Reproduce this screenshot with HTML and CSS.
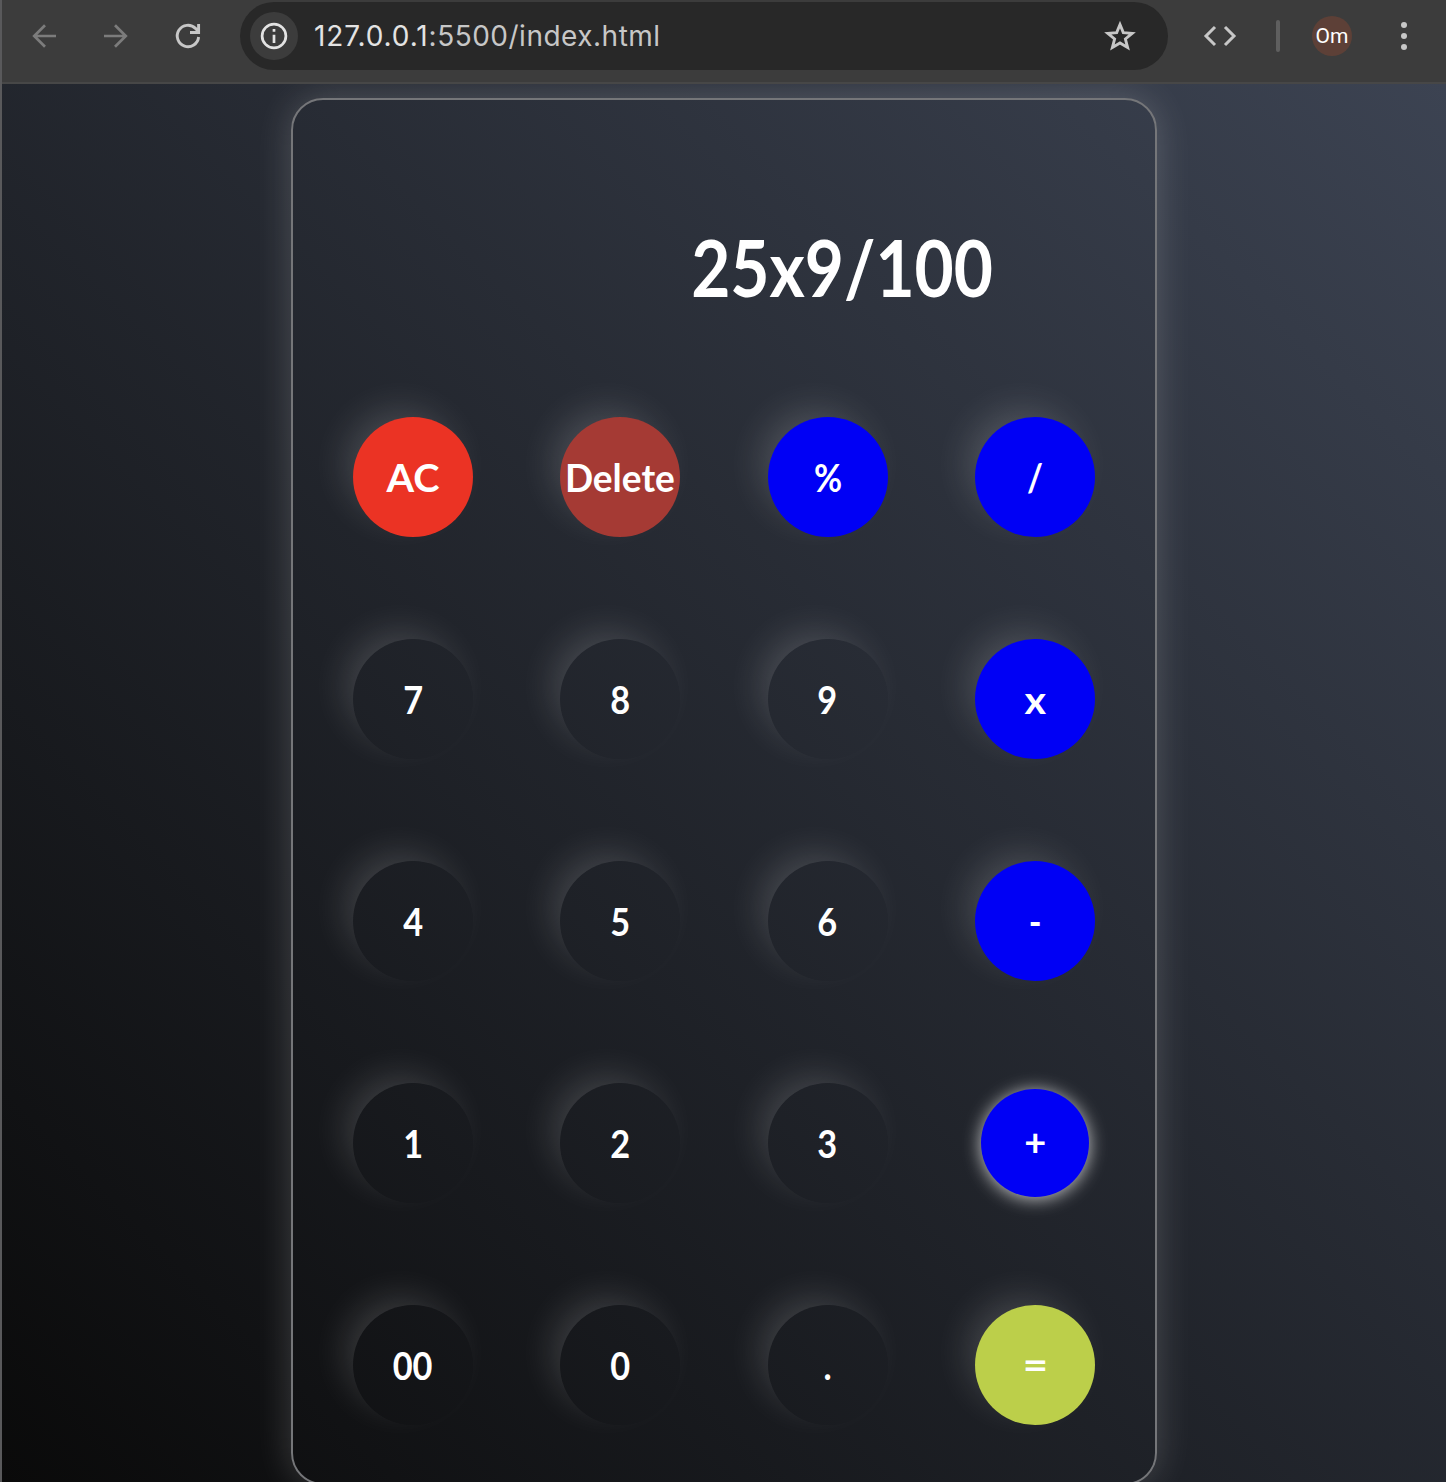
FILE: index.html
```html
<!DOCTYPE html>
<html lang="en">
<head>
<meta charset="utf-8">
<title>Calculator</title>
<link rel="stylesheet" href="styles.css">
</head>
<body>
<header class="toolbar">
  <svg class="icon nav-back dim" viewBox="0 0 40 40"><path d="M36 20H14M25 9.200L14.200 20L25 30.800"/></svg>
  <svg class="icon nav-forward dim" viewBox="0 0 40 40"><path d="M4 20H26M15 9.200L25.800 20L15 30.800"/></svg>
  <svg class="icon nav-reload" viewBox="0 0 40 40"><path d="M30.600 21A10.700 10.700 0 1 1 27.500 12.400L30 15M30.600 8V16.500H22"/></svg>
  <div class="omnibox">
    <span class="site-info"><svg viewBox="0 0 28 28"><circle cx="14" cy="14" r="11.900"/><path d="M14 12.700V21M14 7V9.800"/></svg></span>
    <span class="url"><b>127.0.0.1</b>:5500/index.html</span>
    <svg class="star" viewBox="0 0 32 32"><path d="M16 4.500L19.300 12.600L28.200 13.300L21.400 19L23.600 27.500L16 22.900L8.400 27.500L10.600 19L3.800 13.300L12.700 12.600Z"/></svg>
  </div>
  <svg class="code" viewBox="0 0 36 24"><path d="M13 3L4 12L13 21M23 3L32 12L23 21"/></svg>
  <span class="divider"></span>
  <span class="avatar">Om</span>
  <span class="menu"><i></i><i></i><i></i></span>
</header>
<main class="page">
  <section class="calculator">
    <div class="display"><span>25x9/100</span></div>
    <div class="keys">
      <button class="key clear"><span>AC</span></button>
      <button class="key delete"><span>Delete</span></button>
      <button class="key operator"><span>%</span></button>
      <button class="key operator"><span>/</span></button>
      <button class="key"><span>7</span></button>
      <button class="key"><span>8</span></button>
      <button class="key"><span>9</span></button>
      <button class="key operator times"><span>x</span></button>
      <button class="key"><span>4</span></button>
      <button class="key"><span>5</span></button>
      <button class="key"><span>6</span></button>
      <button class="key operator"><span>-</span></button>
      <button class="key"><span>1</span></button>
      <button class="key"><span>2</span></button>
      <button class="key"><span>3</span></button>
      <button class="key operator pressed"><span>+</span></button>
      <button class="key"><span>00</span></button>
      <button class="key"><span>0</span></button>
      <button class="key"><span>.</span></button>
      <button class="key equals"><span>=</span></button>
    </div>
  </section>
</main>
</body>
</html>
```
FILE: styles.css
```css
* { box-sizing: border-box; }
html, body { margin: 0; height: 1482px; overflow: hidden; }
body { display: flex; flex-direction: column; background: #0a0a0a; border-left: 2px solid #59595b; }

.toolbar {
  flex: none;
  display: flex;
  align-items: center;
  height: 84px;
  padding: 0 22px 10px;
  background: #3c3c3c;
  border-bottom: 2px solid #474747;
}
.toolbar svg { display: block; flex: none; fill: none; stroke: #c7c7c7; stroke-width: 2.9; }
.icon { width: 40px; height: 40px; }
.toolbar .dim { stroke: #7c7c7c; stroke-width: 2.7; }
.nav-back { margin-left: -4px; }
.nav-forward { margin-left: 40px; }
.nav-reload { margin-left: 28px; }
.omnibox {
  display: flex;
  align-items: center;
  width: 928px;
  height: 68px;
  margin-left: 32px;
  padding: 0 32px 0 10px;
  border-radius: 34px;
  background: #282828;
}
.site-info { display: flex; align-items: center; justify-content: center; width: 48px; height: 48px; border-radius: 50%; background: #3c3c3c; }
.toolbar .site-info svg { width: 28px; height: 28px; stroke: #e3e3e3; stroke-width: 2.7; }
.url { margin-left: 16px; color: #c7c7c7; font: 400 28px/40px Inter, sans-serif; letter-spacing: 0.5px; white-space: nowrap; }
.url b { color: #e3e3e3; font-weight: 400; letter-spacing: 0.9px; }
.toolbar .star { width: 32px; height: 32px; margin-left: auto; }
.toolbar .code { width: 36px; height: 24px; margin-left: 34px; stroke-width: 3; }
.divider { width: 4px; height: 32px; margin-left: 38px; border-radius: 2px; background: #5f5f5f; }
.avatar { display: flex; align-items: center; justify-content: center; width: 40px; height: 40px; margin-left: 32px; border-radius: 50%; background: #5d4037; color: #fff; font: 400 21px Roboto, sans-serif; }
.menu { display: flex; flex-direction: column; gap: 5px; margin-left: 49px; }
.menu i { width: 6px; height: 6px; border-radius: 50%; background: #c7c7c7; }

.page {
  flex: 1;
  min-height: 0;
  padding-top: 14px;
  overflow: hidden;
  background: linear-gradient(45deg, #0a0a0a, #3c4352);
}
.calculator {
  width: 866px;
  height: 1387px;
  margin-left: 289px;
  padding: 0 60px;
  border: 2px solid #757679;
  border-radius: 32px;
  box-shadow: 0 0 36px rgba(255, 255, 255, 0.19);
}
.display {
  display: flex;
  align-items: center;
  justify-content: flex-end;
  height: 317px;
  padding: 16px 102px 0 0;
  color: #fff;
  font: 700 79px/1 Lato, sans-serif;
}
.display span { transform: scaleX(0.855); transform-origin: right; }
.keys {
  display: grid;
  grid-template-columns: repeat(4, 120px);
  justify-content: space-between;
  row-gap: 102px;
}
.key {
  display: flex;
  align-items: center;
  justify-content: center;
  width: 120px;
  height: 120px;
  padding: 0;
  border: 0;
  border-radius: 50%;
  background: transparent;
  box-shadow: -13px -13px 36px -6px rgba(255, 255, 255, 0.16);
  color: #fff;
  font: 700 39px/1 Lato, sans-serif;
}
.key span { transform: scaleX(0.88); }
.clear { background: #eb3324; }
.clear span { transform: scaleX(1.02); }
.delete { background: #a53a34; }
.delete span { transform: scaleX(0.95); }
.operator { background: #0000f5; }
.times span { transform: scaleX(1.06); }
.equals { background: #bccf4a; }
.equals span { transform: translateY(-1px) scaleX(1.12); }
.pressed { transform: scale(0.9); box-shadow: 0 2px 20px rgba(255, 255, 255, 0.75); }
.pressed span { transform: translateY(-2px) scale(1.08, 1.08); }
```
